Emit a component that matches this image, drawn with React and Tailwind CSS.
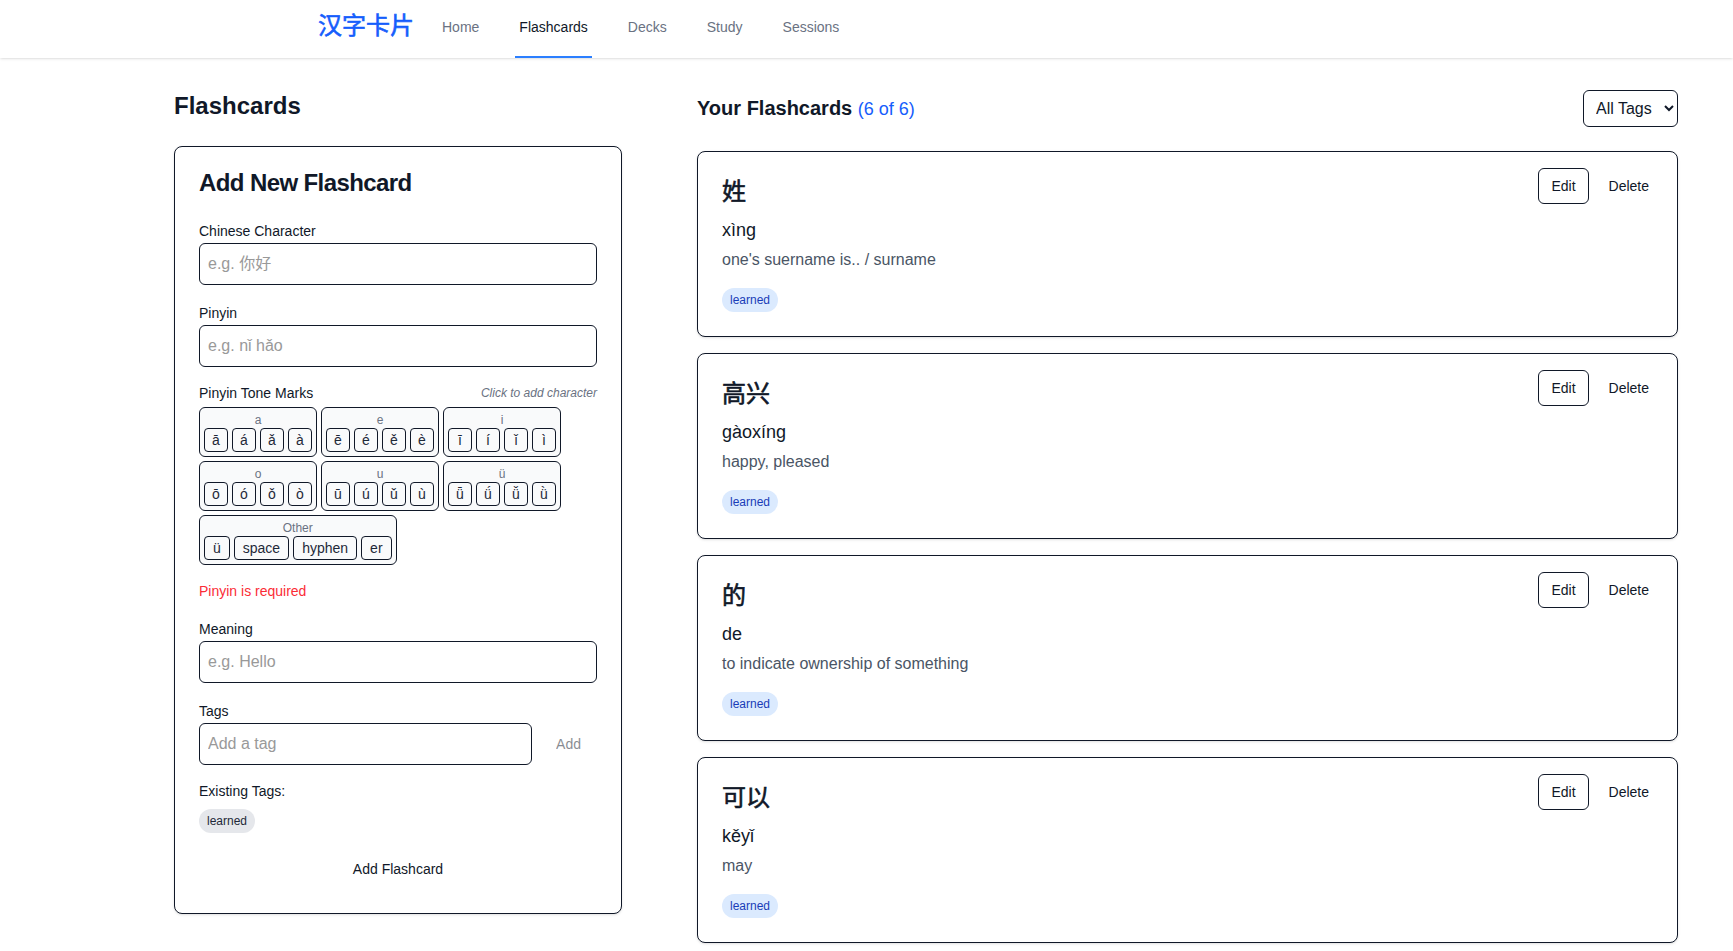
const navItems = ["Home", "Flashcards", "Decks", "Study", "Sessions"];

const toneGroups = [
  { label: "a", chars: ["ā", "á", "ǎ", "à"] },
  { label: "e", chars: ["ē", "é", "ě", "è"] },
  { label: "i", chars: ["ī", "í", "ǐ", "ì"] },
  { label: "o", chars: ["ō", "ó", "ǒ", "ò"] },
  { label: "u", chars: ["ū", "ú", "ǔ", "ù"] },
  { label: "ü", chars: ["ǖ", "ǘ", "ǚ", "ǜ"] },
];

const cards = [
  { hanzi: "姓", pinyin: "xìng", meaning: "one's suername is.. / surname" },
  { hanzi: "高兴", pinyin: "gàoxíng", meaning: "happy, pleased" },
  { hanzi: "的", pinyin: "de", meaning: "to indicate ownership of something" },
  { hanzi: "可以", pinyin: "kěyǐ", meaning: "may" },
];

function Field({ label, placeholder }) {
  return (
    <div className="mb-4">
      <label className="block text-sm pt-0.5 mb-0.5 text-gray-900">{label}</label>
      <input
        placeholder={placeholder}
        className="block w-full h-[42px] px-2 py-2 text-base border border-gray-900 rounded-md placeholder:text-[#999]"
      />
    </div>
  );
}

function ToneGroup({ label, children }) {
  return (
    <div className="p-1 border border-gray-900 rounded-md bg-gray-50">
      <div className="text-xs leading-4 text-center text-gray-500">{label}</div>
      <div className="flex gap-1">{children}</div>
    </div>
  );
}

function FlashcardRow({ hanzi, pinyin, meaning }) {
  return (
    <div className="relative p-6 border border-gray-900 rounded-lg bg-white shadow-sm">
      <h3 className="text-2xl leading-8 font-normal [-webkit-text-stroke:0.6px] text-gray-900">{hanzi}</h3>
      <p className="mt-2 text-lg leading-7 text-gray-900">{pinyin}</p>
      <p className="mt-1 text-base leading-6 text-gray-600">{meaning}</p>
      <div className="mt-4 flex">
        <span className="px-2 py-1 text-xs leading-4 rounded-full bg-blue-100 text-blue-800">
          learned
        </span>
      </div>
      <div className="absolute top-4 right-4 flex gap-2">
        <button className="h-9 px-3 text-sm border border-gray-900 rounded-md text-gray-900">
          Edit
        </button>
        <button className="h-9 px-3 text-sm text-gray-900">Delete</button>
      </div>
    </div>
  );
}

export default function App() {
  return (
    <div className="h-screen overflow-hidden bg-white text-gray-900 font-['Liberation_Sans','Noto_Sans_CJK_SC',sans-serif]">
      <header className="h-[58px] pl-[318px] flex shadow-sm">
        <div className="text-2xl leading-[52px] font-normal [-webkit-text-stroke:0.6px] text-blue-600">汉字卡片</div>
        <nav className="ml-6 flex gap-8">
          {navItems.map((item) => (
            <a
              key={item}
              className={`px-1 pb-0.5 flex items-center text-sm border-b-2 ${
                item === "Flashcards"
                  ? "border-blue-500 text-gray-900"
                  : "border-transparent text-gray-500"
              }`}
            >
              {item}
            </a>
          ))}
        </nav>
      </header>

      <main className="pl-[174px] pr-[55px] pt-8 flex gap-[75px]">
        <section className="w-[448px] shrink-0">
          <h1 className="text-2xl leading-8 font-bold mb-6">Flashcards</h1>
          <div className="p-6 border border-gray-900 rounded-lg bg-white shadow-sm">
            <h2 className="text-2xl leading-none font-semibold tracking-tight pb-6">
              Add New Flashcard
            </h2>
            <Field label="Chinese Character" placeholder="e.g. 你好" />
            <Field label="Pinyin" placeholder="e.g. nǐ hǎo" />

            <div className="flex items-center justify-between mb-1">
              <span className="text-sm">Pinyin Tone Marks</span>
              <span className="text-xs italic text-gray-500">Click to add character</span>
            </div>
            <div className="flex flex-wrap gap-1">
              {toneGroups.map((g) => (
                <ToneGroup key={g.label} label={g.label}>
                  {g.chars.map((c) => (
                    <button
                      key={c}
                      className="w-6 h-6 text-sm leading-none border border-gray-900 rounded text-gray-800"
                    >
                      {c}
                    </button>
                  ))}
                </ToneGroup>
              ))}
              <ToneGroup label="Other">
                {["ü", "space", "hyphen", "er"].map((c) => (
                  <button
                    key={c}
                    className="h-6 px-2 text-sm leading-none border border-gray-900 rounded text-gray-800"
                  >
                    {c}
                  </button>
                ))}
              </ToneGroup>
            </div>
            <p className="mt-4 mb-4 text-sm text-red-500">Pinyin is required</p>

            <Field label="Meaning" placeholder="e.g. Hello" />

            <label className="block text-sm pt-0.5 mb-0.5">Tags</label>
            <div className="flex gap-2">
              <input
                placeholder="Add a tag"
                className="flex-1 min-w-0 h-[42px] px-2 py-2 text-base border border-gray-900 rounded-md placeholder:text-[#999]"
              />
              <button disabled className="h-[42px] px-4 text-sm text-gray-900 opacity-50">
                Add
              </button>
            </div>

            <p className="mt-4 mb-2 text-sm">Existing Tags:</p>
            <div className="flex">
              <span className="px-2 py-1 text-xs leading-4 rounded-full bg-gray-200 text-gray-800">
                learned
              </span>
            </div>

            <button className="mt-4 w-full h-10 text-sm">Add Flashcard</button>
          </div>
        </section>

        <section className="flex-1 min-w-0 pt-0">
          <div className="flex items-center justify-between mb-6">
            <h2 className="text-xl font-semibold">
              Your Flashcards <span className="text-lg font-normal text-blue-600">(6 of 6)</span>
            </h2>
            <select className="w-[95px] h-[37px] px-2 text-base border border-gray-900 rounded-md bg-white">
              <option>All Tags</option>
            </select>
          </div>
          <div className="flex flex-col gap-4">
            {cards.map((c) => (
              <FlashcardRow key={c.hanzi} {...c} />
            ))}
          </div>
        </section>
      </main>
    </div>
  );
}
